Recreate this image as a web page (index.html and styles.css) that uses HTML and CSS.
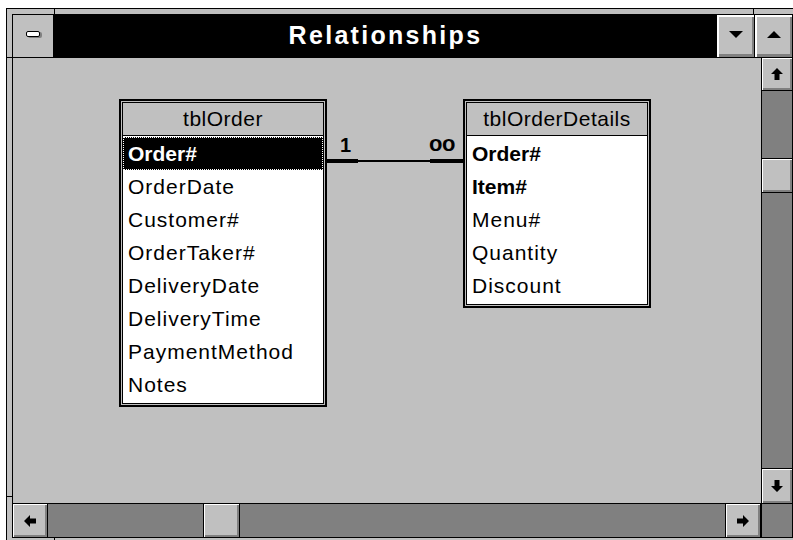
FILE: index.html
```html
<!DOCTYPE html>
<html lang="en">
<head>
  <meta charset="UTF-8" />
  <title>Relationships</title>
  <link rel="stylesheet" href="styles.css">
</head>
<body>
  <div class="window">
    <span class="notch notch-v" style="left: 47px; top: 0;"></span>
    <span class="notch notch-v" style="left: 746px; top: 0;"></span>
    <span class="notch notch-v" style="left: 47px; top: 529px;"></span>
    <span class="notch notch-h" style="left: 0; top: 48px;"></span>
    <span class="notch notch-h" style="left: 0; top: 487px;"></span>

    <div class="inner">
      <div class="titlebar">
        <div class="sysmenu"><span class="sysbar"></span></div>
        <div class="title">Relationships</div>
        <div class="tbtn">
          <svg width="14" height="7" viewBox="0 0 14 7"><path d="M0 0H14L7 7Z" fill="#000"/></svg>
        </div>
        <div class="tbtn tbtn-max">
          <svg width="14" height="7" viewBox="0 0 14 7"><path d="M0 7H14L7 0Z" fill="#000"/></svg>
        </div>
      </div>

      <div class="content">
        <div class="canvas">
          <div class="table" style="left: 106px; top: 41px; width: 208px;">
            <div class="table-in">
              <div class="thead">tblOrder</div>
              <div class="fields">
                <div class="field key sel">Order#</div>
                <div class="field">OrderDate</div>
                <div class="field">Customer#</div>
                <div class="field">OrderTaker#</div>
                <div class="field">DeliveryDate</div>
                <div class="field">DeliveryTime</div>
                <div class="field">PaymentMethod</div>
                <div class="field">Notes</div>
              </div>
            </div>
          </div>

          <svg class="join" width="137" height="10" viewBox="0 0 137 10">
            <rect x="0" y="3" width="32" height="4" fill="#000"/>
            <rect x="32" y="4" width="72" height="2" fill="#000"/>
            <rect x="104" y="3" width="33" height="4" fill="#000"/>
          </svg>
          <span class="card card-one">1</span>
          <span class="card card-many">oo</span>

          <div class="table" style="left: 450px; top: 41px; width: 188px;">
            <div class="table-in">
              <div class="thead">tblOrderDetails</div>
              <div class="fields">
                <div class="field key">Order#</div>
                <div class="field key">Item#</div>
                <div class="field">Menu#</div>
                <div class="field">Quantity</div>
                <div class="field">Discount</div>
              </div>
            </div>
          </div>
        </div>

        <div class="vscroll">
          <div class="sbtn">
            <svg width="14" height="14" viewBox="0 0 14 14"><path d="M7 1L13 7H9.5V13H4.5V7H1Z" fill="#000"/></svg>
          </div>
          <div class="track vtrack-a"></div>
          <div class="sbtn thumb-v"></div>
          <div class="track vtrack-b"></div>
          <div class="sbtn sbtn-down">
            <svg width="14" height="14" viewBox="0 0 14 14"><path d="M7 13L13 7H9.5V1H4.5V7H1Z" fill="#000"/></svg>
          </div>
        </div>
      </div>

      <div class="hscroll">
        <div class="sbtn hbtn">
          <svg width="14" height="14" viewBox="0 0 14 14"><path d="M1 7L7 1V4.5H13V9.5H7V13Z" fill="#000"/></svg>
        </div>
        <div class="track htrack-a"></div>
        <div class="sbtn thumb-h"></div>
        <div class="track htrack-b"></div>
        <div class="sbtn hbtn hbtn-right">
          <svg width="14" height="14" viewBox="0 0 14 14"><path d="M13 7L7 1V4.5H1V9.5H7V13Z" fill="#000"/></svg>
        </div>
        <div class="corner"></div>
      </div>
    </div>
  </div>
</body>
</html>
```

FILE: styles.css
```css
body {
  margin: 0;
  height: 540px;
  overflow: hidden;
  background: #fff;
  font-family: "Liberation Sans", Arial, sans-serif;
}
.window {
  position: relative;
  box-sizing: border-box;
  width: 793px;
  margin: 8px 0 0 6px;
  border: 1px solid #000;
  padding: 5px;
  background: #c0c0c0;
}
.notch {
  position: absolute;
  background: #000;
}
.notch-v {
  width: 1px;
  height: 5px;
}
.notch-h {
  width: 5px;
  height: 1px;
}
.inner {
  border: 1px solid #000;
}

/* title bar */
.titlebar {
  display: flex;
  height: 42px;
  border-bottom: 1px solid #000;
}
.sysmenu {
  width: 41px;
  border-right: 1px solid #000;
  background: #c0c0c0;
  display: flex;
  justify-content: center;
  align-items: flex-start;
  padding-top: 16px;
  box-sizing: border-box;
}
.sysbar {
  width: 12px;
  height: 4px;
  border: 1px solid #000;
  border-radius: 2px;
  background: #fff;
  box-shadow: 2px 1px 0 #808080;
}
.title {
  flex: 1;
  background: #000;
  color: #fff;
  font-weight: bold;
  font-size: 25px;
  letter-spacing: 2.3px;
  text-align: center;
  line-height: 40px;
}
.tbtn {
  width: 37px;
  background: #c0c0c0;
  display: flex;
  justify-content: center;
  align-items: center;
  padding-bottom: 4px;
  box-sizing: border-box;
  box-shadow: inset 1px 1px #fff, inset 2px 2px #fff, inset -1px -1px #808080, inset -2px -3px #808080;
}
.tbtn-max {
  width: 38px;
  border-left: 1px solid #000;
}

/* client area */
.content {
  display: flex;
  height: 445px;
}
.canvas {
  flex: 1;
  position: relative;
  background: #c0c0c0;
  border-right: 1px solid #000;
}
.table {
  position: absolute;
  box-sizing: border-box;
  border: 2px solid #000;
  padding: 1px;
  background: #c0c0c0;
}
.table-in {
  border: 1px solid #000;
  background: #fff;
}
.thead {
  height: 32px;
  line-height: 32px;
  text-align: center;
  font-size: 21px;
  letter-spacing: 0.5px;
  background: #c0c0c0;
  border-bottom: 1px solid #000;
}
.fields {
  padding: 1px 0 2px;
}
.field {
  height: 33px;
  line-height: 33px;
  padding-left: 5px;
  font-size: 21px;
  letter-spacing: 1px;
  white-space: nowrap;
}
.field.key {
  font-weight: bold;
  letter-spacing: 0;
}
.field.sel {
  background: #000;
  color: #fff;
  outline: 1px dotted #fff;
  outline-offset: -1px;
}
.join {
  position: absolute;
  left: 313px;
  top: 98px;
}
.card {
  position: absolute;
  font-weight: bold;
}
.card-one {
  left: 327px;
  top: 77px;
  font-size: 20px;
  line-height: 20px;
}
.card-many {
  left: 416px;
  top: 75px;
  font-size: 22px;
  line-height: 22px;
  letter-spacing: -0.5px;
}

/* scroll bars */
.sbtn {
  background: #c0c0c0;
  display: flex;
  justify-content: center;
  align-items: center;
  box-shadow: inset 1px 1px #fff, inset -1px -1px #808080, inset -2px -2px #808080;
}
.track {
  background: #808080;
}
.vscroll {
  width: 30px;
  display: flex;
  flex-direction: column;
}
.vscroll .sbtn {
  height: 32px;
}
.vtrack-a {
  height: 67px;
  border-top: 1px solid #000;
  border-bottom: 1px solid #000;
}
.vscroll .thumb-v {
  height: 33px;
}
.vtrack-b {
  flex: 1;
  border-top: 1px solid #000;
  border-bottom: 1px solid #000;
}
.vscroll .sbtn-down {
  height: 34px;
}
.hscroll {
  display: flex;
  height: 33px;
  border-top: 1px solid #000;
}
.hbtn {
  width: 34px;
}
.htrack-a {
  width: 155px;
  border-left: 1px solid #000;
  border-right: 1px solid #000;
}
.thumb-h {
  width: 35px;
}
.htrack-b {
  flex: 1;
  border-left: 1px solid #000;
  border-right: 1px solid #000;
}
.hbtn-right {
  border-right: 1px solid #000;
}
.corner {
  width: 30px;
  border-left: 1px solid #000;
  background: #808080;
}
```
